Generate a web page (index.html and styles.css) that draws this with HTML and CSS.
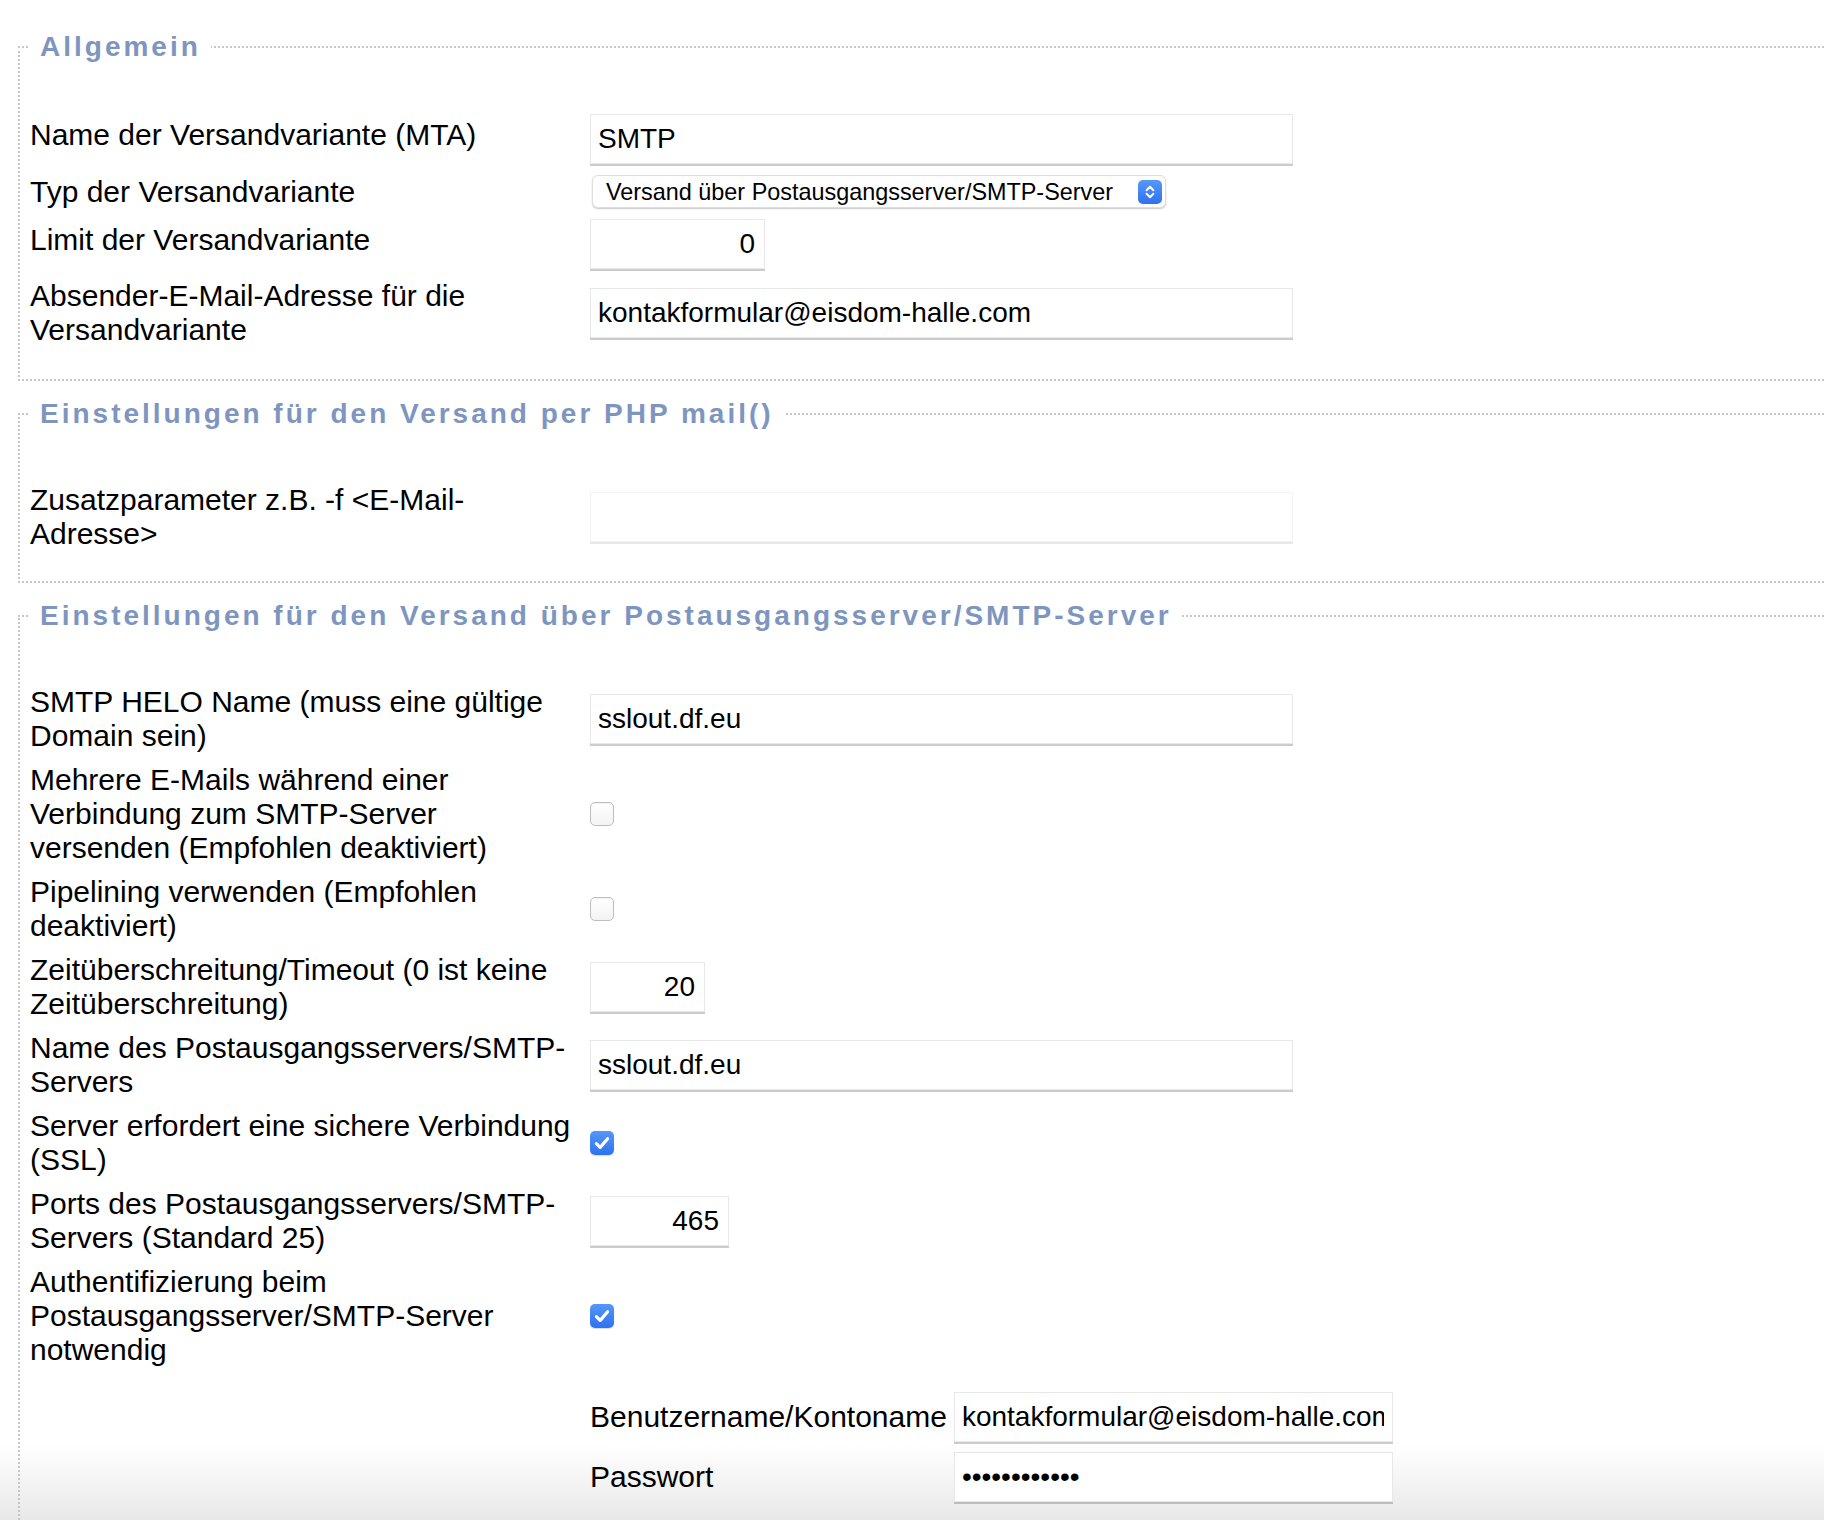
FILE: index.html
```html
<!DOCTYPE html>
<html lang="de">
<head>
<meta charset="utf-8">
<title>Versandvariante</title>
<link rel="stylesheet" href="styles.css">
</head>
<body>
<form class="settings">
  <fieldset class="group group--first">
    <legend class="group-title">Allgemein</legend>
    <div class="rows">
      <div class="row row--lift">
        <label class="label" for="mta-name">Name der Versandvariante (MTA)</label>
        <div class="control"><input class="field field--wide" id="mta-name" type="text" value="SMTP"></div>
      </div>
      <div class="row row--select">
        <label class="label" for="mta-type">Typ der Versandvariante</label>
        <div class="control">
          <span class="select-wrap">
            <select class="select" id="mta-type">
              <option>Versand über Postausgangsserver/SMTP-Server</option>
            </select>
            <svg class="stepper" viewBox="0 0 24 24" aria-hidden="true">
              <defs>
                <linearGradient id="blue" x1="0" y1="0" x2="0" y2="1">
                  <stop offset="0" stop-color="#5597f8"/>
                  <stop offset="1" stop-color="#2e72f0"/>
                </linearGradient>
              </defs>
              <rect x="0" y="0" width="24" height="24" rx="5" fill="url(#blue)"/>
              <path d="M8.6 10.2 12 6.8l3.4 3.4M8.6 13.8 12 17.2l3.4-3.4" fill="none" stroke="#fff" stroke-width="2" stroke-linecap="round" stroke-linejoin="round"/>
            </svg>
          </span>
        </div>
      </div>
      <div class="row row--lift">
        <label class="label" for="mta-limit">Limit der Versandvariante</label>
        <div class="control"><input class="field field--num field--limit" id="mta-limit" type="text" value="0"></div>
      </div>
      <div class="row">
        <label class="label" for="mta-from">Absender-E-Mail-Adresse für die Versandvariante</label>
        <div class="control"><input class="field field--wide" id="mta-from" type="text" value="kontakformular@eisdom-halle.com"></div>
      </div>
    </div>
  </fieldset>

  <fieldset class="group">
    <legend class="group-title">Einstellungen für den Versand per PHP mail()</legend>
    <div class="rows">
      <div class="row">
        <label class="label" for="php-params">Zusatzparameter z.B. -f &lt;E-Mail-Adresse&gt;</label>
        <div class="control"><input class="field field--wide field--faint" id="php-params" type="text" value=""></div>
      </div>
    </div>
  </fieldset>

  <fieldset class="group group--last">
    <legend class="group-title">Einstellungen für den Versand über Postausgangsserver/SMTP-Server</legend>
    <div class="rows">
      <div class="row">
        <label class="label" for="smtp-helo">SMTP HELO Name (muss eine gültige Domain sein)</label>
        <div class="control"><input class="field field--wide" id="smtp-helo" type="text" value="sslout.df.eu"></div>
      </div>
      <div class="row">
        <span class="label">Mehrere E-Mails während einer Verbindung zum SMTP-Server versenden (Empfohlen deaktiviert)</span>
        <div class="control"><span class="check"></span></div>
      </div>
      <div class="row">
        <span class="label">Pipelining verwenden (Empfohlen deaktiviert)</span>
        <div class="control"><span class="check"></span></div>
      </div>
      <div class="row">
        <label class="label" for="smtp-timeout">Zeitüberschreitung/Timeout (0 ist keine Zeitüberschreitung)</label>
        <div class="control"><input class="field field--num field--timeout" id="smtp-timeout" type="text" value="20"></div>
      </div>
      <div class="row">
        <label class="label" for="smtp-host">Name des Postausgangsservers/SMTP-Servers</label>
        <div class="control"><input class="field field--wide" id="smtp-host" type="text" value="sslout.df.eu"></div>
      </div>
      <div class="row">
        <span class="label">Server erfordert eine sichere Verbindung (SSL)</span>
        <div class="control">
          <span class="check check--on">
            <svg viewBox="0 0 24 24" aria-hidden="true"><path d="M6.4 12.6l3.8 3.8 7.4-8.6" fill="none" stroke="#fff" stroke-width="3.2" stroke-linecap="round" stroke-linejoin="round"/></svg>
          </span>
        </div>
      </div>
      <div class="row">
        <label class="label" for="smtp-port">Ports des Postausgangsservers/SMTP-Servers (Standard 25)</label>
        <div class="control"><input class="field field--num field--port" id="smtp-port" type="text" value="465"></div>
      </div>
      <div class="row">
        <span class="label">Authentifizierung beim Postausgangsserver/SMTP-Server notwendig</span>
        <div class="control">
          <span class="check check--on">
            <svg viewBox="0 0 24 24" aria-hidden="true"><path d="M6.4 12.6l3.8 3.8 7.4-8.6" fill="none" stroke="#fff" stroke-width="3.2" stroke-linecap="round" stroke-linejoin="round"/></svg>
          </span>
        </div>
      </div>
      <div class="row">
        <span class="label"></span>
        <div class="control">
          <div class="auth">
            <label class="label" for="smtp-user">Benutzername/Kontoname</label>
            <input class="field field--auth" id="smtp-user" type="text" value="kontakformular@eisdom-halle.com">
            <label class="label" for="smtp-pass">Passwort</label>
            <input class="field field--auth" id="smtp-pass" type="password" value="geheimpasswo">
          </div>
        </div>
      </div>
    </div>
  </fieldset>
</form>
</body>
</html>
```

FILE: styles.css
```css
html {
  background: #fff linear-gradient(to bottom, #fff 0, #fff 1445px, #e8e8e8 1520px) fixed;
}

body {
  margin: 0;
  font-family: "Liberation Sans", Arial, Helvetica, sans-serif;
  color: #000;
  overflow-x: hidden;
}

.settings {
  margin: 0;
  padding: 0;
}

.group {
  margin: 17px 0 0 18px;
  padding: 53px 0 30px 10px;
  border: 2px dotted #c6c6c6;
  border-right: none;
  min-width: 0;
}

.group--first {
  margin-top: 31px;
  padding-top: 51px;
  padding-bottom: 32px;
}

.group--last {
  padding-bottom: 60px;
}

.group-title {
  padding: 0 10px;
  font-size: 28px;
  font-weight: bold;
  letter-spacing: 3px;
  color: #7e96bf;
  line-height: normal;
}

.rows {
  display: flex;
  flex-direction: column;
  gap: 10px;
}

.row {
  display: grid;
  grid-template-columns: 548px 1fr;
  column-gap: 12px;
  align-items: center;
}

.label {
  font-size: 30px;
  line-height: 34px;
}

.row--lift .label {
  margin-bottom: 9px;
}

.row--select {
  min-height: 35px;
}

.control {
  display: flex;
  align-items: center;
}

.field {
  box-sizing: border-box;
  height: 50px;
  margin: 0;
  padding: 0 8px 0 7px;
  border: 1px solid #e8e8e8;
  border-radius: 0;
  background: #fff;
  box-shadow: 0 1.5px 0.5px rgba(0, 0, 0, 0.2);
  font-family: "Liberation Sans", Arial, Helvetica, sans-serif;
  font-size: 28px;
  color: #000;
  outline: none;
}

.field--wide {
  width: 703px;
}

.field--faint {
  border-color: #f2f2f2;
  box-shadow: 0 1.5px 0.5px rgba(0, 0, 0, 0.09);
}

.field--num {
  text-align: right;
  padding-right: 9px;
}

.field--limit {
  width: 175px;
}

.field--timeout {
  width: 115px;
}

.field--port {
  width: 139px;
}

.field--auth {
  width: 439px;
}

.select-wrap {
  position: relative;
  display: inline-block;
  margin-left: 2px;
}

.select {
  box-sizing: border-box;
  width: 574px;
  height: 33px;
  margin: 0;
  padding: 0 40px 0 13px;
  -webkit-appearance: none;
  appearance: none;
  border: 1px solid #dedede;
  border-radius: 6px;
  background: #fff;
  box-shadow: 0 1px 1.5px rgba(0, 0, 0, 0.22);
  font-family: "Liberation Sans", Arial, Helvetica, sans-serif;
  font-size: 23.4px;
  color: #000;
  outline: none;
}

.stepper {
  position: absolute;
  top: 5px;
  right: 4px;
  width: 24px;
  height: 24px;
}

.check {
  box-sizing: border-box;
  display: inline-flex;
  width: 24px;
  height: 24px;
  border: 1px solid #bdbdbd;
  border-radius: 5px;
  background: linear-gradient(#ffffff, #f3f3f3);
  box-shadow: inset 0 1px 1px rgba(0, 0, 0, 0.05);
}

.check--on {
  border: none;
  background: linear-gradient(#5597f8, #2e72f0);
  box-shadow: 0 0.5px 1px rgba(0, 0, 0, 0.15);
}

.check--on svg {
  width: 24px;
  height: 24px;
}

.auth {
  display: grid;
  grid-template-columns: auto 439px;
  column-gap: 7px;
  row-gap: 10px;
  align-items: center;
  margin-top: 15px;
}

.auth .label {
  white-space: nowrap;
}
```
